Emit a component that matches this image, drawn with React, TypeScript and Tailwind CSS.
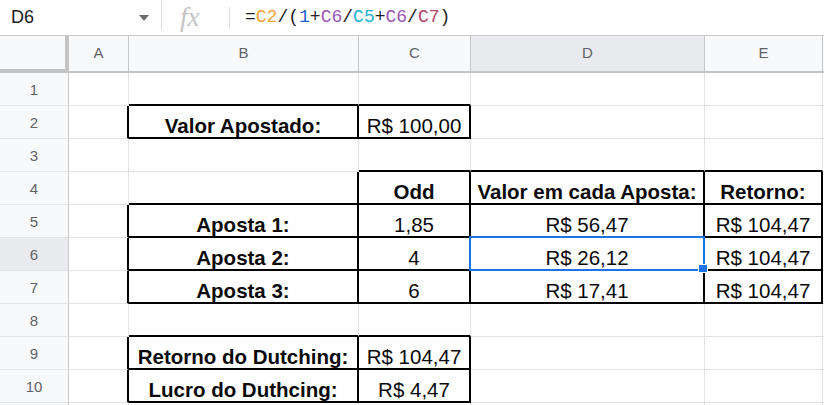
import React from "react";

type Cell = { t?: string; b?: boolean };

const COLS = ["A", "B", "C", "D", "E"];

const data: Record<string, Cell> = {
  B2: { t: "Valor Apostado:", b: true },
  C2: { t: "R$ 100,00" },
  C4: { t: "Odd", b: true },
  D4: { t: "Valor em cada Aposta:", b: true },
  E4: { t: "Retorno:", b: true },
  B5: { t: "Aposta 1:", b: true },
  C5: { t: "1,85" },
  D5: { t: "R$ 56,47" },
  E5: { t: "R$ 104,47" },
  B6: { t: "Aposta 2:", b: true },
  C6: { t: "4" },
  D6: { t: "R$ 26,12" },
  E6: { t: "R$ 104,47" },
  B7: { t: "Aposta 3:", b: true },
  C7: { t: "6" },
  D7: { t: "R$ 17,41" },
  E7: { t: "R$ 104,47" },
  B9: { t: "Retorno do Dutching:", b: true },
  C9: { t: "R$ 104,47" },
  B10: { t: "Lucro do Duthcing:", b: true },
  C10: { t: "R$ 4,47" },
};

const rightBlack = new Set([
  "A2", "B2", "C2",
  "B4", "C4", "D4", "E4",
  "A5", "B5", "C5", "D5", "E5",
  "A6", "B6", "C6", "D6", "E6",
  "A7", "B7", "C7", "D7", "E7",
  "A9", "B9", "C9",
  "A10", "B10", "C10",
]);

const bottomBlack = new Set([
  "B1", "C1", "B2", "C2",
  "C3", "D3", "E3",
  "B4", "C4", "D4", "E4",
  "B5", "C5", "D5", "E5",
  "B6", "C6", "D6", "E6",
  "B7", "C7", "D7", "E7",
  "B8", "C8", "B9", "C9", "B10", "C10",
]);

const gridCols = "grid grid-cols-[69px_60px_230px_112px_234px_118px_1fr]";

function DataCell({ id }: { id: string }) {
  const c = data[id];
  const rb = rightBlack.has(id);
  const bb = bottomBlack.has(id);
  const sel = id === "D6";
  return (
    <div
      className={
        "relative flex items-end justify-center overflow-visible " +
        (rb ? "border-r-2 border-r-black " : "border-r border-r-[#e2e3e3] ") +
        (bb ? "border-b-2 border-b-black" : "border-b border-b-[#e2e3e3]")
      }
    >
      {c?.t && (
        <span
          className={
            "whitespace-nowrap text-[20.5px] leading-[23px] text-[#0a0a0a] " +
            (c.b ? "font-bold" : "font-normal")
          }
        >
          {c.t}
        </span>
      )}
      {sel && (
        <>
          <div className="pointer-events-none absolute -left-[2px] -top-[2px] -right-[2px] -bottom-[2px] z-10 border-2 border-[#1a73e8]" />
          <div className="pointer-events-none absolute -right-[5px] -bottom-[4px] z-20 h-[9px] w-[10px] border border-white bg-[#1a73e8]" />
        </>
      )}
    </div>
  );
}

export default function App() {
  const rows = Array.from({ length: 11 }, (_, i) => i + 1);
  return (
    <div
      className="h-[405px] w-[824px] overflow-hidden bg-white"
      style={{ fontFamily: '"Liberation Sans", Arial, sans-serif' }}
    >
      {/* Formula bar */}
      <div className="flex h-[36px] items-center border-b border-b-[#c7c7c7] bg-white">
        <div className="w-[130px] pl-[11px] text-[18px] text-[#202124]">D6</div>
        <svg width="10" height="6" viewBox="0 0 10 6" className="ml-[9px]">
          <path d="M0 0 L10 0 L5 6 Z" fill="#6b6b6b" />
        </svg>
        <div className="ml-[12px] h-[30px] w-px self-start bg-[#dadce0]" />
        <div
          className="ml-[18px] w-[28px] text-[27px] italic leading-none text-[#c4c4c4]"
          style={{ fontFamily: '"Liberation Serif", "Times New Roman", serif' }}
        >
          fx
        </div>
        <div className="ml-[21px] h-[21px] w-px bg-[#dadce0]" />
        <div
          className="ml-[15px] whitespace-pre text-[18px] text-[#202124]"
          style={{ fontFamily: '"Liberation Mono", "DejaVu Sans Mono", monospace' }}
        >
          <span>=</span>
          <span className="text-[#f0a23a]">C2</span>
          <span>/(</span>
          <span className="text-[#1a5fcc]">1</span>
          <span>+</span>
          <span className="text-[#9a57b3]">C6</span>
          <span>/</span>
          <span className="text-[#2aaed0]">C5</span>
          <span>+</span>
          <span className="text-[#9a57b3]">C6</span>
          <span>/</span>
          <span className="text-[#b1456b]">C7</span>
          <span>)</span>
        </div>
      </div>

      {/* Column headers */}
      <div className={gridCols + " h-[37px]"}>
        <div className="border-r-[4px] border-b-[4px] border-r-[#c4c4c4] border-b-[#c4c4c4] bg-[#f8f9fa]" />
        {COLS.map((c) => (
          <div
            key={c}
            className={
              "flex items-center justify-center border-r border-b-2 border-r-[#c7c7c7] border-b-[#c4c4c4] text-[15px] text-[#5f6368] " +
              (c === "D" ? "bg-[#e8eaed]" : "bg-[#f8f9fa]")
            }
          >
            {c}
          </div>
        ))}
        <div className="border-b-2 border-b-[#c4c4c4] bg-[#f8f9fa]" />
      </div>

      {/* Rows */}
      {rows.map((r) => (
        <div key={r} className={gridCols + " h-[33px]"}>
          <div
            className={
              "flex items-center justify-center border-r border-b border-r-[#c7c7c7] border-b-[#e2e3e3] pt-[2px] text-[15px] text-[#5f6368] " +
              (r === 6 ? "bg-[#e8eaed]" : "bg-[#f8f9fa]")
            }
          >
            {r <= 10 ? r : ""}
          </div>
          {COLS.map((c) => (
            <DataCell key={c} id={c + r} />
          ))}
          <div className="border-b border-b-[#e2e3e3]" />
        </div>
      ))}
    </div>
  );
}
